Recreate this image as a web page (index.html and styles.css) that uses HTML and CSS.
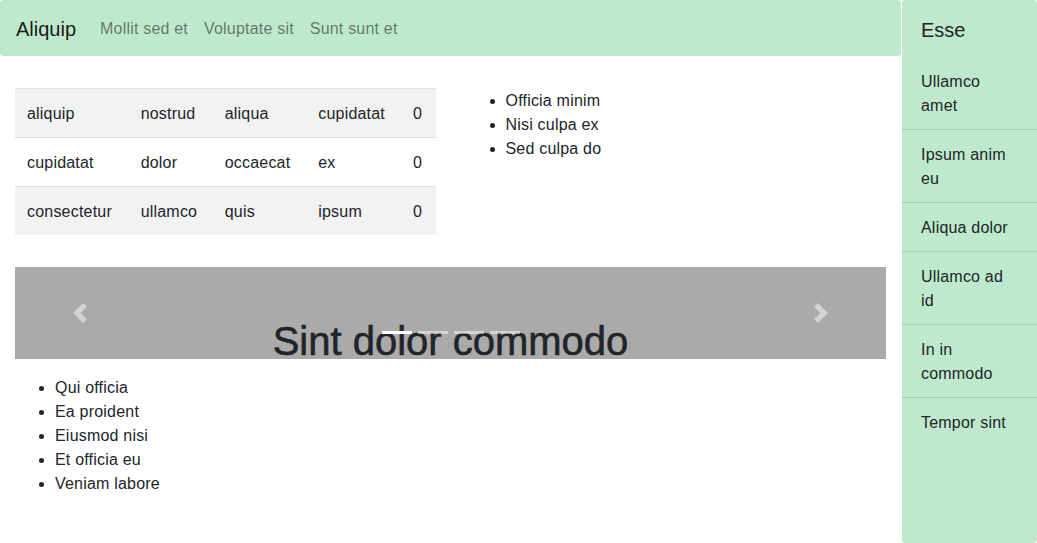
FILE: index.html
```html
<!DOCTYPE html>
<html lang="en">
<head>
<meta charset="utf-8">
<title>Aliquip</title>
<link rel="stylesheet" href="styles.css">
</head>
<body>
<div class="layout">
  <div class="main">
    <nav class="navbar">
      <a class="brand" href="#">Aliquip</a>
      <ul class="nav-links">
        <li><a href="#">Mollit sed et</a></li>
        <li><a href="#">Voluptate sit</a></li>
        <li><a href="#">Sunt sunt et</a></li>
      </ul>
    </nav>
    <div class="row">
      <div class="col">
        <table class="table">
          <tbody>
            <tr class="striped"><td>aliquip</td><td>nostrud</td><td>aliqua</td><td>cupidatat</td><td>0</td></tr>
            <tr><td>cupidatat</td><td>dolor</td><td>occaecat</td><td>ex</td><td>0</td></tr>
            <tr class="striped"><td>consectetur</td><td>ullamco</td><td>quis</td><td>ipsum</td><td>0</td></tr>
          </tbody>
        </table>
      </div>
      <div class="col">
        <ul class="list">
          <li>Officia minim</li>
          <li>Nisi culpa ex</li>
          <li>Sed culpa do</li>
        </ul>
      </div>
    </div>
    <div class="carousel">
      <a class="control prev" href="#">
        <svg width="20" height="20" viewBox="0 0 8 8" fill="#fff"><path d="M5.25 0l-4 4 4 4 1.5-1.5L4.25 4l2.5-2.5L5.25 0z"/></svg>
      </a>
      <div class="caption">Sint dolor commodo</div>
      <a class="control next" href="#">
        <svg width="20" height="20" viewBox="0 0 8 8" fill="#fff"><path d="M2.75 0l-1.5 1.5L3.75 4l-2.5 2.5L2.75 8l4-4-4-4z"/></svg>
      </a>
      <ol class="indicators">
        <li class="active"></li>
        <li></li>
        <li></li>
        <li></li>
      </ol>
    </div>
    <ul class="list lower">
      <li>Qui officia</li>
      <li>Ea proident</li>
      <li>Eiusmod nisi</li>
      <li>Et officia eu</li>
      <li>Veniam labore</li>
    </ul>
  </div>
  <aside class="sidebar">
    <div class="sidebar-header">Esse</div>
    <ul class="sidebar-list">
      <li>Ullamco amet</li>
      <li>Ipsum anim eu</li>
      <li>Aliqua dolor</li>
      <li>Ullamco ad id</li>
      <li>In in commodo</li>
      <li>Tempor sint</li>
    </ul>
  </aside>
</div>
</body>
</html>
```

FILE: styles.css
```css
* { box-sizing: border-box; }

html, body {
  margin: 0;
  padding: 0;
  height: 100%;
}

body {
  font-family: "Liberation Sans", Arial, sans-serif;
  font-size: 16px;
  line-height: 1.5;
  letter-spacing: 0.2px;
  color: #212529;
  background: #fff;
}

.layout {
  display: flex;
  height: 543px;
  gap: 1px;
}

.main {
  flex: 1;
  min-width: 0;
}

.navbar {
  display: flex;
  align-items: center;
  height: 56px;
  padding: 8px 16px;
  background: #bfe9cc;
  border-radius: 4px;
}

.brand {
  font-size: 20px;
  line-height: 30px;
  padding: 6px 0 4px;
  margin-right: 16px;
  letter-spacing: 0;
  color: rgba(0, 0, 0, 0.9);
  text-decoration: none;
}

.nav-links {
  display: flex;
  list-style: none;
  margin: 0;
  padding: 0;
}

.nav-links a {
  display: block;
  padding: 9px 8px 7px;
  color: rgba(0, 0, 0, 0.5);
  text-decoration: none;
}

.row {
  display: grid;
  grid-template-columns: 1fr 1fr;
  padding-top: 32px;
}

.col {
  padding: 0 15px;
}

.table {
  width: 100%;
  border-collapse: collapse;
  margin-bottom: 16px;
}

.table td {
  padding: 13px 12px 11px;
  border-top: 1px solid #dee2e6;
  vertical-align: top;
}

.table tr.striped {
  background: #f2f2f2;
}

.list {
  margin: 0 0 16px;
  padding-left: 40px;
  padding-top: 1px;
}

.carousel {
  position: relative;
  margin: 16px 15px 0;
  height: 92px;
  background: #aaa;
}

.control {
  position: absolute;
  top: 0;
  bottom: 0;
  width: 15%;
  display: flex;
  align-items: center;
  justify-content: center;
  opacity: 0.5;
}

.control.prev { left: 0; }
.control.next { right: 0; }

.caption {
  position: absolute;
  left: 15%;
  right: 15%;
  top: 50px;
  text-align: center;
  font-size: 40px;
  font-weight: 500;
  line-height: 1.2;
  letter-spacing: 0;
  color: #212529;
  -webkit-text-stroke: 0.6px #212529;
}

.indicators {
  position: absolute;
  left: 0;
  right: 0;
  bottom: 0;
  margin: 0 15% 15px;
  padding: 0;
  display: flex;
  justify-content: center;
  list-style: none;
}

.indicators li {
  width: 30px;
  height: 3px;
  margin: 0 3px;
  box-sizing: content-box;
  border-top: 10px solid transparent;
  border-bottom: 10px solid transparent;
  background-color: #fff;
  background-clip: padding-box;
  opacity: 0.5;
}

.indicators li.active {
  opacity: 1;
}

.lower {
  margin: 16px 15px 0;
}

.sidebar {
  width: 135px;
  flex: none;
  background: #bfe9cc;
  border-radius: 4px;
}

.sidebar-header {
  font-size: 20px;
  line-height: 30px;
  padding: 15px 19px 12px;
  letter-spacing: 0;
  color: #212529;
}

.sidebar-list {
  list-style: none;
  margin: 0;
  padding: 0;
}

.sidebar-list li {
  padding: 13px 19px 11px;
  border-top: 1px solid rgba(0, 0, 0, 0.125);
}

.sidebar-list li:first-child {
  border-top: none;
}
```
